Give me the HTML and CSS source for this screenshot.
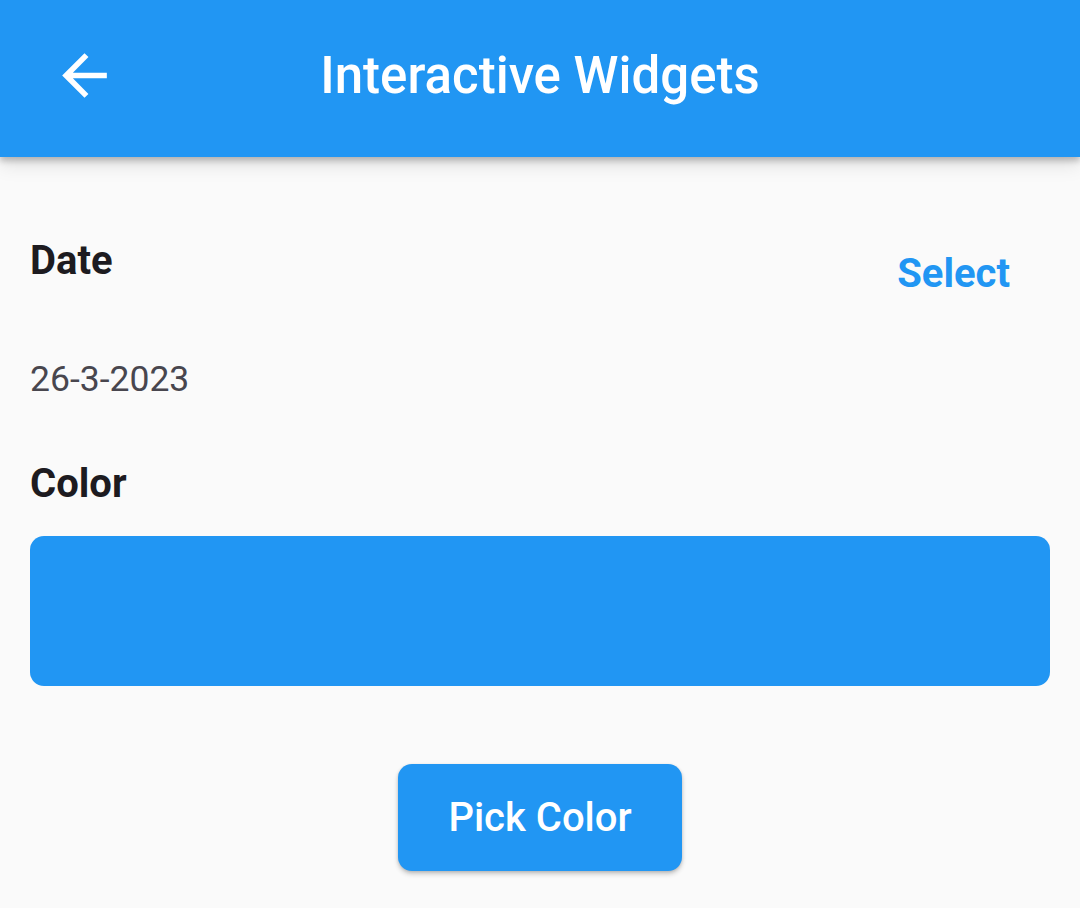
FILE: index.html
```html
<!DOCTYPE html>
<html lang="en">
<head>
<meta charset="utf-8">
<title>Interactive Widgets</title>
<link rel="stylesheet" href="styles.css">
</head>
<body>
<header class="appbar">
  <div class="appbar-lead">
    <svg class="back-icon" viewBox="0 0 24 24" width="67" height="67" aria-hidden="true">
      <path fill="#ffffff" d="M20 11H7.83l5.59-5.59L12 4l-8 8 8 8 1.41-1.41L7.83 13H20v-2z"/>
    </svg>
  </div>
  <h1 class="appbar-title">Interactive Widgets</h1>
  <div class="appbar-trail"></div>
</header>
<main class="content">
  <div class="date-row">
    <div class="label">Date</div>
    <button class="text-btn">Select</button>
  </div>
  <div class="date-value">26-3-2023</div>
  <div class="label color-label">Color</div>
  <div class="swatch"></div>
  <div class="btn-wrap">
    <button class="pick-btn">Pick Color</button>
  </div>
</main>
</body>
</html>
```
FILE: styles.css
```css
html, body {
  margin: 0;
  padding: 0;
}
body {
  width: 1080px;
  height: 908px;
  background: #fafafa;
  font-family: Roboto, "Noto Sans", sans-serif;
  overflow: hidden;
}
.appbar {
  height: 157px;
  background: #2196f3;
  display: grid;
  grid-template-columns: 1fr auto 1fr;
  align-items: center;
  box-shadow: 0 4px 6px rgba(0,0,0,0.22), 0 8px 18px rgba(0,0,0,0.10);
  position: relative;
  z-index: 1;
}
.appbar-lead {
  display: flex;
  align-items: center;
  padding-left: 51px;
  padding-bottom: 6px;
}
.back-icon {
  display: block;
}
.appbar-title {
  margin: 0;
  color: #ffffff;
  font-weight: 500;
  font-size: 51px;
  line-height: 60px;
  letter-spacing: 0;
  padding-bottom: 6px;
}
.content {
  padding: 80px 30px 0 30px;
}
.date-row {
  display: flex;
  justify-content: space-between;
  align-items: flex-start;
}
.label {
  font-size: 40px;
  font-weight: 700;
  line-height: 48px;
  color: #1d1b20;
}
.text-btn {
  margin-top: 13px;
  margin-right: 40px;
  padding: 0;
  border: none;
  background: none;
  font-family: inherit;
  font-size: 40px;
  font-weight: 700;
  line-height: 48px;
  color: #2196f3;
}
.date-value {
  margin-top: 60px;
  font-size: 35.5px;
  line-height: 42px;
  color: #48464e;
}
.color-label {
  margin-top: 60px;
}
.swatch {
  margin-top: 28px;
  height: 150px;
  border-radius: 14px;
  background: #2196f3;
}
.btn-wrap {
  display: flex;
  justify-content: center;
  margin-top: 78px;
}
.pick-btn {
  width: 284px;
  height: 107px;
  border: none;
  border-radius: 14px;
  background: #2196f3;
  color: #ffffff;
  font-family: inherit;
  font-size: 40px;
  font-weight: 500;
  box-shadow: 0 3px 5px rgba(0,0,0,0.2), 0 1px 3px rgba(0,0,0,0.12);
}
```
